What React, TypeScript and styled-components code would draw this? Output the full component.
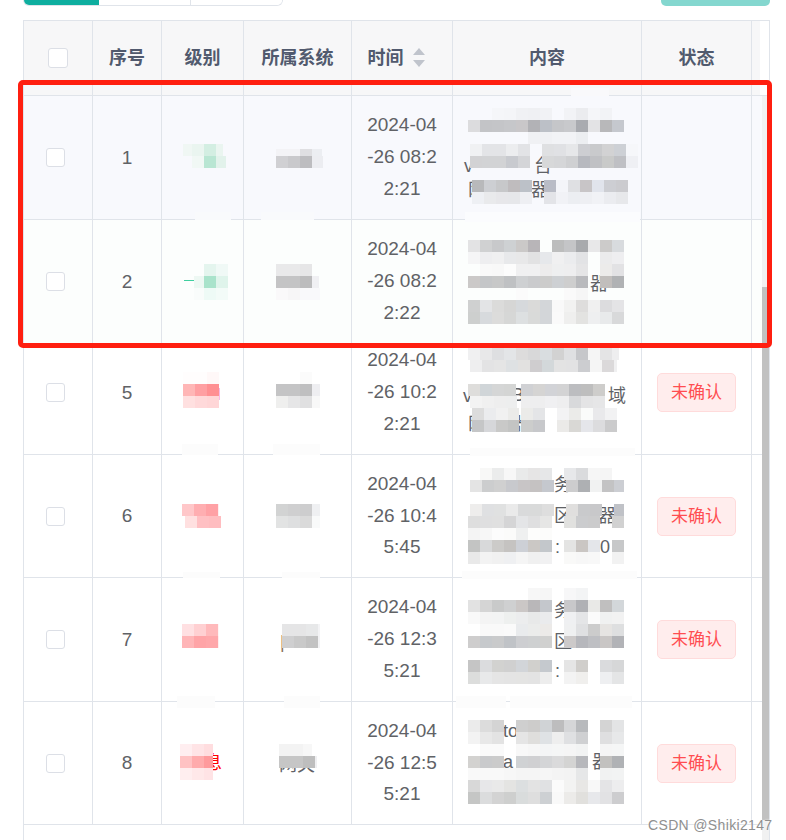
import React from "react";
import styled, { createGlobalStyle } from "styled-components";

type Band = { x: number; y: number; cells: string[]; end?: number };
type Patch = { x: number; y: number; w: number; h: number; fill?: string };
type Glyph = { x: number; y: number; text: string; fill?: string };

type Blur = {
  bands: Band[];
  patches?: Patch[];
  glyphs?: Glyph[];
};

type RowData = {
  no: number;
  top: number;
  height: number;
  bg: string;
  time: string;
  pending: boolean;
  level: Blur;
  system: Blur;
  content: Blur;
};

const COLUMNS = "69px 69px 82px 108px 101px 189px 110px";
const LINE = "#e0e4ea";
const CELL = 12;

const GlobalStyle = createGlobalStyle`
  html, body {
    margin: 0;
    height: 840px;
    overflow: hidden;
    background: #fff;
  }
  body {
    font-family: "Liberation Sans", "Noto Sans CJK SC", sans-serif;
  }
`;

const Page = styled.div`
  position: relative;
  width: 786px;
  height: 840px;
  overflow: hidden;
  padding: 0 16px 0 23px;
  box-sizing: border-box;
`;

const Toolbar = styled.div`
  display: flex;
  justify-content: space-between;
  height: 6px;
  margin-bottom: 14px;
`;

const Tabs = styled.div`
  display: flex;
  width: 260px;
  height: 6px;
  box-sizing: border-box;
  border: 1px solid ${LINE};
  border-top: none;
  border-radius: 0 0 6px 6px;
  overflow: hidden;
`;

const Tab = styled.div<{ $active?: boolean; $width: number }>`
  width: ${({ $width }) => $width}px;
  margin-left: ${({ $active }) => ($active ? "-1px" : "0")};
  background: ${({ $active }) => ($active ? "#0eae9f" : "#fff")};
  border-right: ${({ $active }) => ($active ? "none" : `1px solid ${LINE}`)};
  &:last-child {
    border-right: none;
  }
`;

const ActionButton = styled.div`
  width: 109px;
  height: 6px;
  background: #84d7cf;
  border-radius: 0 0 5px 5px;
`;

const Frame = styled.div`
  width: 747px;
  height: 820px;
  box-sizing: border-box;
  border: 1px solid ${LINE};
  border-bottom: none;
  overflow: hidden;
`;

const HeaderRow = styled.div`
  display: grid;
  grid-template-columns: ${COLUMNS} 8px 1fr;
  height: 75px;
  box-sizing: border-box;
  border-bottom: 1px solid ${LINE};
`;

const HeaderCell = styled.div<{ $shift?: number }>`
  display: flex;
  align-items: center;
  justify-content: center;
  gap: 9px;
  padding-right: ${({ $shift }) => $shift ?? 0}px;
  padding-bottom: 1px;
  background: #f7f7f8;
  border-right: 1px solid ${LINE};
`;

const HeaderLabel = styled.span`
  display: block;
  padding-bottom: 4px;
  color: #515a6e;
  font-size: 18px;
  font-weight: 700;
`;

const HeaderGutter = styled.div`
  background: #f7f7f8;
`;

const Body = styled.div`
  display: flex;
  height: 744px;
`;

const RowsColumn = styled.div`
  display: flex;
  flex-direction: column;
  width: 738px;
`;

const Scrolled = styled.div`
  flex: 1;
  overflow: hidden;
`;

const ScrollList = styled.div`
  margin-top: -13px;
`;

const Row = styled.div<{ $height: number; $bg: string }>`
  display: grid;
  grid-template-columns: ${COLUMNS} 1fr;
  height: ${({ $height }) => $height}px;
  box-sizing: border-box;
  background: ${({ $bg }) => $bg};
  border-bottom: 1px solid ${LINE};
`;

const Cell = styled.div`
  display: flex;
  align-items: center;
  justify-content: center;
  border-right: 1px solid ${LINE};
  color: #606266;
  font-size: 19px;
  min-width: 0;
`;

const CheckCell = styled(Cell)`
  padding-right: 5px;
`;

const TimeCell = styled(Cell)`
  padding: 0 14px 1px;
  line-height: 31.7px;
  text-align: center;
  word-break: break-all;
`;

const BlurCell = styled(Cell)`
  display: block;
`;

const EmptyCell = styled.div``;

const Checkbox = styled.div<{ $size: number }>`
  width: ${({ $size }) => $size}px;
  height: ${({ $size }) => $size}px;
  box-sizing: border-box;
  background: #fff;
  border: 1px solid #dcdfe6;
  border-radius: 3px;
`;

const Tag = styled.div`
  display: flex;
  align-items: center;
  justify-content: center;
  width: 79px;
  height: 39px;
  padding-bottom: 4px;
  box-sizing: border-box;
  background: #ffeded;
  border: 1px solid #ffdbdb;
  border-radius: 5px;
  color: #ff4d51;
  font-size: 17px;
`;

const ScrollTrack = styled.div`
  width: 7px;
  background: #f1f1f1;
`;

const ScrollThumb = styled.div`
  width: 7px;
  height: 533px;
  margin-top: 191px;
  background: #c1c1c1;
`;

const Highlight = styled.div`
  position: absolute;
  left: 18px;
  top: 80px;
  width: 754px;
  height: 268px;
  box-sizing: border-box;
  border: 5px solid #ff1f10;
  border-radius: 5px;
  pointer-events: none;
`;

const Watermark = styled.div`
  position: absolute;
  left: 648px;
  top: 816px;
  color: #8f8f8f;
  font-size: 14px;
  line-height: 18px;
  letter-spacing: 0.35px;
  white-space: nowrap;
  text-shadow: 0 0 2px #fff;
`;

const MosaicSvg = styled.svg`
  display: block;
  overflow: visible;
  font-size: 18px;
`;

function Mosaic(props: { blur: Blur; left: number; top: number; width: number; height: number }) {
  const { blur, left, top, width, height } = props;
  return (
    <MosaicSvg width={width} height={height} viewBox={`${left} ${top} ${width} ${height}`}>
      {blur.glyphs?.map((g, i) => (
        <text key={i} x={g.x} y={g.y} fill={g.fill ?? "#606266"}>
          {g.text}
        </text>
      ))}
      {blur.patches?.map((p, i) => (
        <rect key={i} x={p.x} y={p.y} width={p.w} height={p.h} fill={p.fill ?? "#fcfcfc"} />
      ))}
      {blur.bands.map((band) =>
        band.cells.map((c, i) => {
          const x = band.x + i * CELL;
          const w = band.end ? Math.min(CELL, band.end - x) : CELL;
          return c && w > 0 ? (
            <rect key={`${band.y}-${band.x}-${i}`} x={x} y={band.y} width={w} height={CELL} fill={`#${c}`} />
          ) : null;
        })
      )}
    </MosaicSvg>
  );
}

function SortIcon() {
  return (
    <svg width="12" height="20" viewBox="0 0 12 20">
      <path d="M6 0 L12 7 L0 7 Z" fill="#c0c4cc" />
      <path d="M0 12 L12 12 L6 19 Z" fill="#c0c4cc" />
    </svg>
  );
}

const rowsPinned: RowData[] = [
  {
    no: 1,
    top: 96,
    height: 124,
    bg: "#f8f9fd",
    time: "2024-04-26 08:22:21",
    pending: false,
    level: {
      bands: [
        { x: 183, y: 144, cells: ["f0f7f4"], end: 192 },
        { x: 192, y: 144, cells: ["eaf5f0", "d3eee2", "eaf5f0"], end: 223 },
        { x: 192, y: 156, cells: ["f1f8f5", "b9e6d3", "e2f2eb"], end: 226 },
      ],
    },
    system: {
      bands: [
        { x: 276, y: 149, cells: ["f3f3f6", "f3f3f6", "dfdfe2", "eceef2"], end: 322 },
        { x: 276, y: 156, cells: ["d0d0d3", "c9c9cc", "bdbdc0", "ecedf1"], end: 323 },
      ],
    },
    content: {
      patches: [{ x: 571, y: 88, w: 38, h: 8, fill: "#f9f9fb" }],
      bands: [
        { x: 468, y: 108, cells: ["", "", "f5f6f9", "f4f5f8", "f0f1f4", "eff0f3", "f1f2f5", "", "f2f3f6", "ebecef", "f5f6f9", "f2f3f6"] },
        { x: 468, y: 120, cells: ["dcdcde", "c3c4c7", "c4c5c8", "c6c7ca", "c9c7c9", "b2b2b6", "bcc0c7", "c5c6c9", "c8c9cc", "a9abb0", "e3e3e5", "b8b8ba", "c5c8ce"] },
        { x: 468, y: 132, cells: ["", "", "", "", "", "f0f1f4", "f0f1f4", "f2f3f6", "f2f3f6", "eceef1"] },
        { x: 470, y: 144, cells: ["f0f1f3", "e3e4e7", "e3e4e7", "ecedef", "e2e3e6", "", "dfe0e2", "e0e1e4", "e6e7e9", "cdced2", "c9cacc", "d2d2d3", "cdd0d5", "f6f7fa"] },
        { x: 470, y: 156, cells: ["d2d2d4", "d2d3d5", "d2d3d5", "c8cacf", "d4d5d8", "", "d7d8d9", "d5d6d8", "cfd0d2", "b7b9bf", "c0c1c4", "c9cac9", "bfc0c4", "eff0f4"] },
        { x: 472, y: 180, cells: ["b8b9bb", "cdcfd3", "c7c8ca", "bfbcbe", "bcc1c8", "", "b9bcc6", "f4f5f9", "dfe0e3", "c8c5c7", "e1e4ec", "cdced3", "cbcbcf"] },
        { x: 472, y: 192, cells: ["eef0f4", "e9eaec", "e7e7ea", "e6e7ea", "eeeff3", "", "e3e4e8", "f1f2f6", "eceef2", "eeeff3", "f1f2f6", "ebecf0", "e7e8eb"] },
      ],
      glyphs: [
        { x: 464, y: 172, text: "v" },
        { x: 534, y: 172, text: "台" },
        { x: 468, y: 196, text: "网" },
        { x: 531, y: 196, text: "器" },
      ],
    },
  },
  {
    no: 2,
    top: 220,
    height: 124,
    bg: "#fcfefd",
    time: "2024-04-26 08:22:22",
    pending: false,
    level: {
      patches: [
        { x: 195, y: 212, w: 36, h: 8, fill: "#f9fafc" },
        { x: 184, y: 280, w: 11, h: 1, fill: "#3fcf9f" },
      ],
      bands: [
        { x: 204, y: 264, cells: ["e4f5ee", "f0f9f6"] },
        { x: 194, y: 276, cells: ["edf8f3"] },
        { x: 204, y: 276, cells: ["a9e3cb", "dff4eb"] },
        { x: 194, y: 288, cells: ["f9fcfb"] },
        { x: 204, y: 288, cells: ["eefaf6", "f3fbf8"] },
      ],
    },
    system: {
      patches: [{ x: 261, y: 212, w: 53, h: 8, fill: "#f9fafc" }],
      bands: [
        { x: 276, y: 264, cells: ["e9e9ea", "e9e9ea", "e6e6e7"] },
        { x: 276, y: 276, cells: ["c4c4c5", "c4c4c5", "bcbcbd", "f0f0f3"], end: 319 },
        { x: 276, y: 288, cells: ["faf9fa", "f7f6f7", "f9f9fb", "f9f9fb"], end: 320 },
      ],
    },
    content: {
      patches: [{ x: 465, y: 212, w: 175, h: 10, fill: "#fbfcfe" }],
      bands: [
        { x: 468, y: 240, cells: ["e3e3e4", "d0d1d2", "c8c9cb", "ced1d3", "cbc9c8", "b8b5b8", "", "bcbdbd", "c4c5c7", "a8aaad", "e8e8e9", "cccbca", "d8dbde"] },
        { x: 468, y: 252, cells: ["f5f5f6", "eeeef0", "f0f0f1", "e8e9eb", "e8e8e9", "e2e2e3", "e6e8eb", "f0f0f1", "ebecee", "e2e3e5", "", "ebebec", "eeeef0"] },
        { x: 468, y: 264, cells: ["", "f9f9f9", "f8f8f8", "fcfcfc", "f0f0f1", "f0f0f1", "edecec", "eeeff0", "eeeeef", "e5e5e6", "", "ecebea", "e2e2e4"] },
        { x: 468, y: 276, cells: ["cbc9c8", "c4c6c8", "c7c8c8", "bfc1c3", "ced0d2", "cacbcd", "cccccb", "cdd0d3", "cecece", "b9babd", "", "c1bebc", "b0b2b4"] },
        { x: 468, y: 288, cells: ["", "", "", "", "fbfbfb", "", "", "", "fafafa", "f6f6f6", "", "", ""] },
        { x: 468, y: 300, cells: ["cfd0d0", "e3e4e6", "dbdbda", "d6d6d5", "d6d9dc", "dadad9", "d3d6d9", "f9f9f9", "f2f2f1", "dedddc", "f0f0f0", "dcdcde", "e4e4e6"] },
        { x: 468, y: 312, cells: ["cdcfce", "d7dadd", "dcdcdb", "d6d7d6", "dde0e1", "d9dad9", "d3d6d9", "fafafa", "efefee", "e3e3e1", "eeeff0", "e8eaeb", "d8d9da"] },
      ],
      glyphs: [{ x: 590, y: 290, text: "器" }],
    },
  },
];

const rowsScrolled: RowData[] = [
  {
    no: 5,
    top: 331,
    height: 124,
    bg: "#fff",
    time: "2024-04-26 10:22:21",
    pending: true,
    level: {
      patches: [{ x: 219, y: 388, w: 1, h: 12, fill: "#f8b8e8" }],
      bands: [
        { x: 183, y: 372, cells: ["fffdfd", "fffdfd", "fff8f8"] },
        { x: 183, y: 384, cells: ["ffb6b6", "ff9fa2", "ff8f92"] },
        { x: 183, y: 396, cells: ["ffe0e0", "ffd9da", "ffd6d7"] },
      ],
    },
    system: {
      bands: [
        { x: 276, y: 372, cells: ["", "", "fbfbfb"] },
        { x: 276, y: 384, cells: ["c4c4c5", "c4c4c5", "bfbfc0", "eeeef1"], end: 320 },
        { x: 276, y: 396, cells: ["efefee", "e6e6e7", "e0e0e1", "f8f8f8"], end: 320 },
      ],
    },
    content: {
      bands: [
        { x: 468, y: 348, cells: ["f0f0f1", "e8e8e9", "dedfe1", "e3e5e7", "dddcdc", "d8d8d9", "d9dde0", "d2d2d2", "dfe0e2", "c6c7ca", "f5f5f5", "e4e4e5", "eeeeef"], end: 619 },
        { x: 470, y: 360, cells: ["eeeeef", "e3e3e4", "e5e5e5", "dee1e3", "e2e1e0", "cfcdcf", "d3d8da", "e3e3e3", "e2e2e3", "cccdd0", "f5f5f5", "dbd9da", "f0f0f1"], end: 617 },
        { x: 468, y: 384, cells: ["dedddb", "d0d5d8", "d5d6d6", "d4d5d4"], end: 517 },
        { x: 521, y: 384, cells: ["d0d1d4", "d5d4d3", "d2d3d7", "d3d3d4", "bcbdc0", "bebebe", "cecdcb"], end: 612 },
        { x: 470, y: 396, cells: ["f3f3f3", "f0f0f0", "eeeeee", "edeeee"], end: 517 },
        { x: 521, y: 396, cells: ["eeeeef", "eeeeef", "f0f0f2", "eeeeef", "d8d9db", "e4e4e5", "e6e6e7"], end: 612 },
        { x: 472, y: 408, cells: ["dcdcdc", "ebecee", "f1f1f1", "ebebe9"], end: 519 },
        { x: 521, y: 408, cells: ["ebebe9", "e4e5e7", "", "f3f3f4", "ebebe9", "fafbfa", "e9e9eb", "f2f2f3"], end: 622 },
        { x: 472, y: 420, cells: ["c5c6c7", "d6d7da", "c9c9c8", "c3c4c3"], end: 519 },
        { x: 521, y: 420, cells: ["cccdcc", "c7c8cb", "", "ebeae8", "d9d8d5", "e5e6ea", "dcdcde", "cbcbcc"], end: 624 },
      ],
      glyphs: [
        { x: 463, y: 402, text: "v" },
        { x: 512, y: 401, text: "B" },
        { x: 608, y: 402, text: "域" },
        { x: 468, y: 430, text: "网" },
        { x: 512, y: 430, text: "器" },
      ],
    },
  },
  {
    no: 6,
    top: 455,
    height: 123,
    bg: "#fff",
    time: "2024-04-26 10:45:45",
    pending: true,
    level: {
      patches: [{ x: 182, y: 444, w: 36, h: 11 }],
      bands: [
        { x: 182, y: 504, cells: ["ffc7c9", "ffaeb1", "ffa1a5", "ffeef0"], end: 219 },
        { x: 185, y: 516, cells: ["ffe0e0", "ffc0c3", "ffbdc0"], end: 221 },
      ],
    },
    system: {
      patches: [{ x: 273, y: 444, w: 47, h: 11 }],
      bands: [
        { x: 276, y: 504, cells: ["d2d3d3", "cfcfd0", "cdcdce", "eff0f2"], end: 320 },
        { x: 276, y: 516, cells: ["e2e3e3", "dedfe0", "dadada", "f9fafa"], end: 320 },
      ],
    },
    content: {
      patches: [{ x: 470, y: 448, w: 165, h: 8 }],
      bands: [
        { x: 480, y: 468, cells: ["f8f8f7", "ebecec", "f7f7f7", "e9eaea", "e6e5e5", "e6e7e8", "", "e7e8ea", "dadbdd", "f6f6f6", "f5f5f5"] },
        { x: 470, y: 480, cells: ["e4e4e4", "cccdce", "d0d0d0", "c8c9cd", "c8c5c6", "c5c2c2", "c5c8ce", "", "cdcdce", "aeb0b3", "f1f2f2", "c3c3c4", "ccced3"], end: 624 },
        { x: 470, y: 504, cells: ["eeedec", "dfe0e2", "e0e1e1", "eaeaea", "d9dadb", "d9dada", "dedede", "", "e0dfde", "c9cacc", "c8c8ca", "", "c0c2c7"], end: 624 },
        { x: 468, y: 516, cells: ["dedede", "dfdfe0", "e0e0e0", "d5d5d6", "e4e5e7", "dfdfe0", "e6e6e5", "", "e1e1df", "cbccce", "cbcbcc", "", "d1d1d1"] },
        { x: 468, y: 528, cells: ["f4f4f4", "f7f7f7", "fcfcfc", "fbfbfa", "eff0f0", "fdfdfc", "fcfcfb"] },
        { x: 468, y: 540, cells: ["c3c4c3", "d8d9da", "cccbc9", "c5c3c1", "cdd0d6", "cbc8c5", "c3c7cb", "", "e4e4e3", "cac6c3", "e4e6ea", "", "c7c8c9"] },
        { x: 468, y: 552, cells: ["e9e9e9", "f3f3f3", "f1f1f1", "eff0f2", "f5f5f5", "f0f0f0", "f1f1f2", "", "f9f9f8", "f7f7f7", "f8f8f8", "", "f2f2f2"] },
      ],
      glyphs: [
        { x: 554, y: 491, text: "务" },
        { x: 554, y: 522, text: "区" },
        { x: 598, y: 522, text: "器" },
        { x: 555, y: 553, text: ":" },
        { x: 600, y: 553, text: "0" },
      ],
    },
  },
  {
    no: 7,
    top: 578,
    height: 124,
    bg: "#fff",
    time: "2024-04-26 12:35:21",
    pending: true,
    level: {
      patches: [{ x: 183, y: 572, w: 37, h: 6 }],
      bands: [
        { x: 182, y: 624, cells: ["ffe0e2", "ffd0d2", "ffb9bb", "fff5f5"], end: 219 },
        { x: 182, y: 636, cells: ["ffb5b7", "ffa4a7", "ffa7aa", "ffeef0"], end: 219 },
      ],
    },
    system: {
      patches: [{ x: 282, y: 572, w: 38, h: 6 }],
      bands: [
        { x: 282, y: 624, cells: ["e5e5e6", "e5e5e6", "e7e8e9", "f3f3f5"], end: 320 },
        { x: 282, y: 636, cells: ["cfcfd0", "c9c9c9", "c2c2c2", "f2f2f4"], end: 320 },
      ],
      glyphs: [{ x: 280, y: 648, text: "|", fill: "#8a6d5a" }],
    },
    content: {
      patches: [{ x: 462, y: 571, w: 175, h: 8 }],
      bands: [
        { x: 528, y: 588, cells: ["f7f7f7", "f6f6f6", "", "f7f7f8", "f3f4f5"] },
        { x: 468, y: 600, cells: ["e2e2e2", "d5d5d5", "c9caca", "cfd0d1", "cbc7c6", "b9b7b9", "c4c7cc", "", "c8c8ca", "b0b1b5", "e9e9e7", "c0bfbf", "d3d7da"] },
        { x: 468, y: 612, cells: ["f9f9f9", "f4f4f4", "f3f4f4", "eef0ef", "ecedee", "e8e9e9", "eaebed", "", "eff0f2", "e4e5e7", "fbfbfb", "f0f1f1", "f2f2f2"] },
        { x: 468, y: 624, cells: ["", "f9f9f9", "f9f9f9", "fafafa", "e9ebed", "ebeceb", "eceae8", "", "eff0f1", "dfe0e2", "cccccc", "e6e4e2", "dedfe0"] },
        { x: 468, y: 636, cells: ["cecdcd", "c6c9cc", "c9cacb", "c0c3c7", "cdced1", "ced0d1", "d0d0cf", "", "ccc9c9", "b6b7bc", "bebfc3", "c9c6c5", "b2b3b7"] },
        { x: 468, y: 660, cells: ["c5c5c5", "dbdcde", "d2d2d0", "d0d0d0", "d2d5d9", "d1d0cd", "c5c9ce", "", "e5e5e5", "d0cecb", "", "dadbdd", "d6d7d8"] },
        { x: 468, y: 672, cells: ["dcdddc", "e8e9ea", "e5e5e5", "e4e4e4", "e4e4e3", "e3e3e3", "ededed", "", "f3f3f3", "f0efed", "", "eeeff1", "e4e5e6"] },
      ],
      glyphs: [
        { x: 554, y: 617, text: "务" },
        { x: 554, y: 648, text: "区" },
        { x: 555, y: 677, text: ":" },
      ],
    },
  },
  {
    no: 8,
    top: 702,
    height: 123,
    bg: "#fff",
    time: "2024-04-26 12:55:21",
    pending: true,
    level: {
      patches: [{ x: 177, y: 696, w: 38, h: 12 }],
      bands: [
        { x: 180, y: 744, cells: ["ffeef0", "ffe4e6", "ffdddf"], end: 213 },
        { x: 180, y: 756, cells: ["ffc2c3", "ffabac", "ff9a9c"], end: 213 },
        { x: 180, y: 768, cells: ["ffeeef", "ffe8e9", "ffe3e5"], end: 213 },
      ],
      glyphs: [{ x: 204, y: 769, text: "息", fill: "#ff0000" }],
    },
    system: {
      patches: [{ x: 284, y: 696, w: 36, h: 12 }],
      bands: [
        { x: 279, y: 744, cells: ["f3f3f3", "f3f3f3", "f7f7f7"], end: 312 },
        { x: 279, y: 756, cells: ["c6c6c6", "c6c6c6", "bebebe", "efeff1"], end: 317 },
      ],
      glyphs: [{ x: 279, y: 771, text: "网关" }],
    },
    content: {
      patches: [
        { x: 456, y: 696, w: 50, h: 12 },
        { x: 510, y: 696, w: 52, h: 12 },
        { x: 560, y: 696, w: 72, h: 12 },
      ],
      bands: [
        { x: 468, y: 720, cells: ["ebebeb", "dcdcdc", "d4d4d4", "", "cfcfcf", "cdcccb", "d0d3d6", "bdbdbe", "d5d6d8", "b8babd", "", "d4d4d4", "e3e4e5"] },
        { x: 468, y: 732, cells: ["f3f3f3", "e8e8e8", "e3e3e3", "", "e5e5e5", "dfdedc", "dfe2e5", "eeeeee", "dfe0e2", "cfd0d2", "", "dfdfe0", "e7e8e9"] },
        { x: 468, y: 744, cells: ["", "fafafa", "fafafa", "", "f8f8f8", "f6f6f6", "f4f5f6", "f5f6f6", "f5f5f5", "f2f3f3", "", "f5f5f5", "f5f6f6"] },
        { x: 468, y: 756, cells: ["d3d2d0", "c9cacc", "cbcbcb", "", "d0d2d4", "d0d0d2", "d4d5d7", "dadadb", "d4d4d3", "b7b8bc", "", "c2c1bf", "b0b2b5"] },
        { x: 468, y: 768, cells: ["f9f9f9", "f9f9f9", "f9f9f9", "f7f7f7", "f5f5f5", "f5f5f5", "f6f6f6", "f4f4f4", "f3f3f3", "e6e7e8", "", "f1f2f2", "f2f3f3"] },
        { x: 468, y: 780, cells: ["d8d8d8", "e7e7e9", "e9e9e9", "e4e4e2", "dcdfe0", "e3e3e3", "e0e1e3", "fbfbfb", "f3f3f2", "e8e7e5", "f8f8f8", "e4e4e6", "ededee"] },
        { x: 468, y: 792, cells: ["c5c6c5", "dbdcdd", "d3d3d3", "cecfce", "d9dcdc", "dedede", "cdd0d3", "f9f9f9", "ecebe9", "e1e0dd", "e7e8eb", "e2e2e4", "cdcdcf"] },
      ],
      glyphs: [
        { x: 503, y: 737, text: "to" },
        { x: 503, y: 768, text: "a" },
        { x: 592, y: 768, text: "器" },
      ],
    },
  },
];

function TableRow({ row }: { row: RowData }) {
  return (
    <Row $height={row.height} $bg={row.bg}>
      <CheckCell>
        <Checkbox $size={19} />
      </CheckCell>
      <Cell>{row.no}</Cell>
      <BlurCell>
        <Mosaic blur={row.level} left={162} top={row.top} width={81} height={row.height - 1} />
      </BlurCell>
      <BlurCell>
        <Mosaic blur={row.system} left={244} top={row.top} width={107} height={row.height - 1} />
      </BlurCell>
      <TimeCell>{row.time}</TimeCell>
      <BlurCell>
        <Mosaic blur={row.content} left={453} top={row.top} width={188} height={row.height - 1} />
      </BlurCell>
      <Cell>{row.pending && <Tag>未确认</Tag>}</Cell>
      <EmptyCell />
    </Row>
  );
}

export default function App() {
  return (
    <Page>
      <GlobalStyle />
      <Toolbar>
        <Tabs>
          <Tab $active $width={77} />
          <Tab $width={91} />
          <Tab $width={92} />
        </Tabs>
        <ActionButton />
      </Toolbar>
      <Frame>
        <HeaderRow>
          <HeaderCell>
            <Checkbox $size={20} />
          </HeaderCell>
          <HeaderCell>
            <HeaderLabel>序号</HeaderLabel>
          </HeaderCell>
          <HeaderCell>
            <HeaderLabel>级别</HeaderLabel>
          </HeaderCell>
          <HeaderCell>
            <HeaderLabel>所属系统</HeaderLabel>
          </HeaderCell>
          <HeaderCell $shift={12}>
            <HeaderLabel>时间</HeaderLabel>
            <SortIcon />
          </HeaderCell>
          <HeaderCell>
            <HeaderLabel>内容</HeaderLabel>
          </HeaderCell>
          <HeaderCell>
            <HeaderLabel>状态</HeaderLabel>
          </HeaderCell>
          <HeaderGutter />
        </HeaderRow>
        <Body>
          <RowsColumn>
            {rowsPinned.map((row) => (
              <TableRow key={row.no} row={row} />
            ))}
            <Scrolled>
              <ScrollList>
                {rowsScrolled.map((row) => (
                  <TableRow key={row.no} row={row} />
                ))}
              </ScrollList>
            </Scrolled>
          </RowsColumn>
          <ScrollTrack>
            <ScrollThumb />
          </ScrollTrack>
        </Body>
      </Frame>
      <Highlight />
      <Watermark>CSDN @Shiki2147</Watermark>
    </Page>
  );
}
